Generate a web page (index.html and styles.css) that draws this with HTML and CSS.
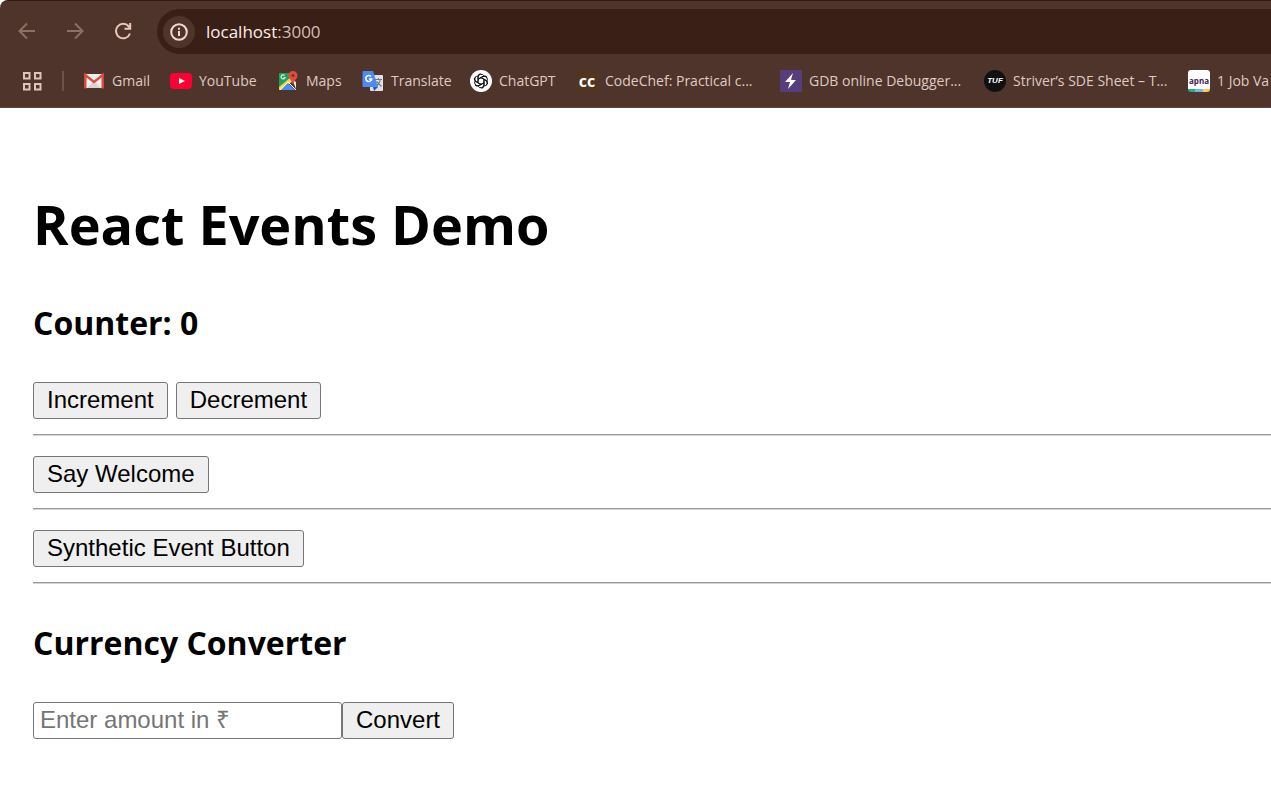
FILE: index.html
```html
<!DOCTYPE html>
<html lang="en">
<head>
<meta charset="utf-8">
<title>React Events Demo</title>
<link rel="stylesheet" href="styles.css">
</head>
<body>
<header class="chrome">
  <div class="toolbar">
    <nav class="nav" aria-label="Navigation">
      <button class="tool dim" aria-label="Back"><svg viewBox="0 0 18 18"><path d="M17 9H2M9 1.5L1.5 9 9 16.500"/></svg></button>
      <button class="tool dim" aria-label="Forward"><svg viewBox="0 0 18 18"><path d="M1 9h15M9 1.500L16.500 9 9 16.500"/></svg></button>
      <button class="tool" aria-label="Reload"><svg viewBox="0 0 18 18"><path d="M16 11.500A7.200 7.200 0 1 1 14.800 4.500L16 6M16.200 1v5.700h-5.700"/></svg></button>
    </nav>
    <div class="address">
      <button class="info" aria-label="Site information"><svg viewBox="0 0 18 18"><circle cx="9" cy="9" r="7.800"/><path d="M9 8v5M9 4.800v2"/></svg></button>
      <span class="url">localhost<span class="port">:3000</span></span>
    </div>
  </div>
  <nav class="bookmarks" aria-label="Bookmarks">
    <button class="apps" aria-label="Apps"><svg viewBox="0 0 20 20"><path d="M2 2h5.500v5.500H2zM13 2h5.500v5.500H13zM2 13h5.500v5.500H2zM13 13h5.500v5.500H13z"/></svg></button>
    <span class="divider"></span>
    <a class="bookmark" href="#"><svg viewBox="0 0 22 22"><path fill="#eee" d="M2 4h18v14H2z"/><path fill="#d5d5d5" d="M4 18l7-7 7 7z"/><path fill="none" stroke="#dd4b3e" stroke-width="2.400" d="M2.300 18.500V5l8.700 7 8.700-7v13.500"/></svg>Gmail</a>
    <a class="bookmark" href="#"><svg viewBox="0 0 22 22"><rect y="3" width="22" height="16" rx="4" fill="#ff0033"/><path fill="#fff" d="M9 8l6 3-6 3z"/></svg>YouTube</a>
    <a class="bookmark" href="#"><svg viewBox="0 0 22 22"><path fill="#1fa15d" d="M2 3h15v5L3 20H2z"/><path fill="#ffd04b" d="M2 17L14 7l3 3L5 20H2z"/><path fill="#e8e8e8" d="M15 9l4 3v7z"/><path fill="#4b8bf5" d="M4 20l7-7 7 7z"/><path fill="none" stroke="#fff" stroke-width="1" d="M3 20l8-8 8 8"/><path fill="none" stroke="#d8f0df" stroke-width="1.200" d="M7.500 5.500a2 2 0 1 0 .5 2H6.500"/><path fill="#e14b3c" d="M16 1a4.500 4.500 0 0 0-4.500 4.500C11.500 9 15 10 15.500 14h1C17 10 20.500 9 20.500 5.500A4.500 4.500 0 0 0 16 1z"/><circle cx="16" cy="5.500" r="1.600" fill="#8c2b23"/></svg>Maps</a>
    <a class="bookmark" href="#"><svg viewBox="0 0 22 22"><rect x="8" y="5" width="13" height="16" rx="1" fill="#e1e1e1"/><path fill="#2b56c5" d="M11 17h5l-4 4z"/><path fill="#4c8bf5" d="M1.500 1H11l5 16H1.500Q.5 17 .5 16V2q0-1 1-1z"/><path fill="none" stroke="#fff" stroke-width="1.500" d="M9 6.500a3 3 0 1 0 .7 2.500H7"/><path fill="none" stroke="#607d8b" stroke-width="1.100" d="M13 9.500h7M16.500 8v1.500M18.500 9.500c-.5 3-2 4.500-3.500 6M14.500 11.500l5 5"/></svg>Translate</a>
    <a class="bookmark" href="#"><svg viewBox="0 0 22 22"><circle cx="11" cy="11" r="11" fill="#fff"/><g fill="none" stroke="#111" stroke-width="1"><path id="petal" d="M8 12.700V7.200a3.200 3.200 0 0 1 5.800-1.600M8.200 9.200l4.800-2.800a3.200 3.200 0 0 1 4 .7"/><use href="#petal" transform="rotate(60 11 11)"/><use href="#petal" transform="rotate(120 11 11)"/><use href="#petal" transform="rotate(180 11 11)"/><use href="#petal" transform="rotate(240 11 11)"/><use href="#petal" transform="rotate(300 11 11)"/></g></svg>ChatGPT</a>
    <a class="bookmark" href="#"><span class="badge chef">cc</span>CodeChef: Practical c...</a>
    <a class="bookmark" href="#"><svg viewBox="0 0 22 22"><path fill="#563d7c" d="M0 0h22v22H0z"/><path fill="#fff" d="M13 3L5 12h5l-2 7 8-9h-5z"/></svg>GDB online Debugger...</a>
    <a class="bookmark" href="#"><span class="badge tuf">TUF</span>Striver’s SDE Sheet – T...</a>
    <a class="bookmark" href="#"><span class="badge apna">apna</span>1 Job Va</a>
  </nav>
</header>
<main class="page">
  <h1>React Events Demo</h1>
  <h2>Counter: 0</h2>
  <div class="row spaced"><button class="btn">Increment</button><button class="btn">Decrement</button></div>
  <hr>
  <div class="row"><button class="btn">Say Welcome</button></div>
  <hr>
  <div class="row"><button class="btn">Synthetic Event Button</button></div>
  <hr>
  <h2>Currency Converter</h2>
  <form class="row"><input class="amount" type="text" placeholder="Enter amount in ₹" aria-label="Enter amount in ₹"><button class="btn" type="button">Convert</button></form>
</main>
</body>
</html>
```
FILE: styles.css
```css
* { box-sizing: border-box; }
body { margin: 0; background: #fff; color: #000; font-family: "Open Sans", "Noto Sans", sans-serif; overflow-x: hidden; }
button { font: inherit; }

.chrome { background: #4f342b; border-top: 1px solid #331a13; border-bottom: 1px solid #5e463e; border-top-left-radius: 8px; overflow: hidden; }
.toolbar { display: flex; padding-top: 8px; }
.nav { display: flex; align-items: center; gap: 30px; width: 157px; height: 44px; padding-left: 18px; flex: none; }
.tool, .info, .apps { border: 0; padding: 0; background: none; display: flex; align-items: center; justify-content: center; }
.tool svg { width: 18px; height: 18px; fill: none; stroke: #e8c4b9; stroke-width: 2; }
.tool.dim svg { stroke: #8d6f66; }
.address { flex: 1; height: 45px; display: flex; align-items: center; gap: 11px; padding-left: 6px; background: #3a1f17; border-radius: 23px 0 0 23px; }
.info { width: 32px; height: 32px; border-radius: 50%; background: #4f342b; }
.info svg { width: 18px; height: 18px; fill: none; stroke: #f0d9d1; stroke-width: 2; }
.url { color: #fbeee9; font-size: 17px; line-height: 24px; }
.port { color: #d3bdb5; }

.bookmarks { display: grid; grid-template-columns: 40px 21px 87px 107px 85px 108px 106px 204px 204px 204px auto; align-items: center; height: 53px; padding-left: 22px; }
.apps { width: 20px; height: 20px; }
.apps svg { width: 20px; height: 20px; fill: none; stroke: #dcc5bd; stroke-width: 2; }
.divider { width: 2px; height: 20px; background: #705148; }
.bookmark { display: flex; align-items: center; gap: 7px; color: #dfcac3; font-size: 14px; line-height: 20px; text-decoration: none; white-space: nowrap; }
.bookmark svg, .badge { width: 22px; height: 22px; flex: none; }
.badge { display: flex; align-items: center; justify-content: center; font-weight: 700; color: #fff; line-height: 20px; }
.chef { background: #52351f; font-size: 16px; }
.tuf { border-radius: 50%; background: #111; font-family: "Liberation Sans", sans-serif; font-size: 8px; font-style: italic; }
.apna { border-radius: 3px; background: linear-gradient(90deg, #27ad86 33%, #76b5e8 33% 67%, #ffcd4d 67%) bottom / 100% 3px no-repeat #fff; color: #402050; font-size: 8px; }

.page { padding: 76px 0 0 33px; }
h1 { margin: 0; font-size: 54px; line-height: 80px; }
h2 { margin: 36px 0; font-size: 32px; line-height: 46px; }
.row { display: flex; }
.spaced { gap: 8px; }
.btn, .amount { height: 37px; border: 1px solid #767676; border-radius: 3px; font-family: "Liberation Sans", Arial, sans-serif; font-size: 24px; }
.btn { padding: 0 13px 2px; background: #efefef; color: #000; }
.amount { width: 309px; padding: 0 6px 1px; background: #fff; }
.amount::placeholder { color: #757575; opacity: 1; }
hr { margin: 15px 0 20px; border: 0; border-top: 1px solid #9a9a9a; border-bottom: 1px solid #d4d4d4; height: 2px; }
```
